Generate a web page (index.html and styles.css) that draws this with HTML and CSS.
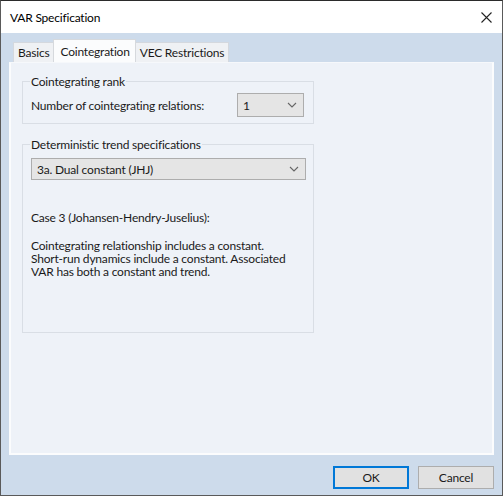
FILE: index.html
```html
<!DOCTYPE html>
<html>
<head>
<meta charset="utf-8">
<link rel="stylesheet" href="styles.css">
</head>
<body>
<div class="window">
  <div class="titlebar">
    <span class="title">VAR Specification</span>
    <svg class="close" width="11" height="11" viewBox="0 0 11 11"><path d="M0.5 0.5 L10.5 10.5 M10.5 0.5 L0.5 10.5" stroke="#222" stroke-width="1.1" fill="none"/></svg>
  </div>
  <div class="body">
    <div class="tabs">
      <div class="tab first">Basics</div>
      <div class="tab active">Cointegration</div>
      <div class="tab last">VEC Restrictions</div>
    </div>
    <div class="panel">
      <div class="group rank">
        <div class="legend">Cointegrating rank</div>
        <div class="row">
          <span>Number of cointegrating relations:</span>
          <div class="select small"><span>1</span><svg width="10" height="6" viewBox="0 0 10 6"><path d="M1 1 L5 5 L9 1" stroke="#666" stroke-width="1.1" fill="none"/></svg></div>
        </div>
      </div>
      <div class="group trend">
        <div class="legend">Deterministic trend specifications</div>
        <div class="select wide"><span>3a. Dual constant (JHJ)</span><svg width="10" height="6" viewBox="0 0 10 6"><path d="M1 1 L5 5 L9 1" stroke="#666" stroke-width="1.1" fill="none"/></svg></div>
        <p class="case">Case 3 (Johansen-Hendry-Juselius):</p>
        <p class="desc">Cointegrating relationship includes a constant.<br>Short-run dynamics include a constant. Associated<br>VAR has both a constant and trend.</p>
      </div>
    </div>
    <div class="footer">
      <button class="btn ok">OK</button>
      <button class="btn">Cancel</button>
    </div>
  </div>
</div>
</body>
</html>
```
FILE: styles.css
```css
html, body {
  margin: 0;
  padding: 0;
}
body {
  font-family: "Lato", "Noto Sans", sans-serif;
  font-size: 12px;
  letter-spacing: -0.2px;
  color: #1a1a1a;
}
.window {
  width: 503px;
  height: 496px;
  box-sizing: border-box;
  border: 1px solid #5a5a5a;
  border-top-color: #2b2b2b;
  background: #cddbeb;
  display: flex;
  flex-direction: column;
}
.titlebar {
  height: 32px;
  background: #ffffff;
  display: flex;
  align-items: center;
  justify-content: space-between;
  padding: 0 10px 0 9px;
  flex: none;
  box-sizing: border-box;
}
.title {
  color: #000;
}
.close {
  margin-top: 1px;
}
.body {
  flex: 1;
  display: flex;
  flex-direction: column;
  padding: 6px 8px 0 8px;
}
.tabs {
  display: flex;
  align-items: flex-end;
  height: 23px;
  padding-left: 4px;
}
.tab {
  height: 20px;
  box-sizing: border-box;
  border: 1px solid #d4d8de;
  border-bottom: none;
  background: #eff1f4;
  padding: 0 4px 0 4px;
  line-height: 19px;
  white-space: nowrap;
}
.tab.active {
  height: 23px;
  background: #fbfcfd;
  border-color: #d6d9dd;
  padding: 0 5px 0 6px;
  line-height: 23px;
  margin: 0 -1px;
  position: relative;
}
.tab.last {
  padding: 0 4px 0 4px;
}
.panel {
  height: 393px;
  box-sizing: border-box;
  background: #eef2f8;
  border: 2px solid #fbfcfd;
  border-top: 1px solid #f6f8fb;
  padding: 18px 0 0 11px;
  display: flex;
  flex-direction: column;
}
.group {
  width: 292px;
  box-sizing: border-box;
  border: 1px solid #d9dee5;
  padding: 0 0 0 8px;
}
.legend {
  display: block;
  width: fit-content;
  margin: -8px 0 0 -1px;
  padding: 0 1px;
  background: #eef2f8;
  line-height: 15px;
}
.rank {
  height: 43px;
}
.rank .row {
  display: flex;
  align-items: center;
  justify-content: space-between;
  padding-right: 9px;
  margin-top: 4px;
}
.select {
  box-sizing: border-box;
  border: 1px solid #adadad;
  background: #e5e5e5;
  display: flex;
  align-items: center;
  justify-content: space-between;
  padding: 0 6px 0 5px;
}
.select.small {
  width: 67px;
  height: 24px;
}
.select.wide {
  width: 275px;
  height: 22px;
  margin-top: 6px;
}
.trend {
  margin-top: 20px;
  height: 189px;
}
.case {
  margin: 31px 0 0 0;
  line-height: 13px;
  white-space: nowrap;
}
.desc {
  margin: 15px 0 0 0;
  line-height: 13px;
  white-space: nowrap;
}
.footer {
  flex: 1;
  display: flex;
  justify-content: flex-end;
  align-items: flex-start;
  gap: 9px;
  padding-top: 11px;
}
.btn {
  width: 76px;
  height: 23px;
  box-sizing: border-box;
  border: 1px solid #adadad;
  background: #e1e1e1;
  font-family: "Lato", "Noto Sans", sans-serif;
  font-size: 12px;
  letter-spacing: -0.2px;
  color: #1a1a1a;
  padding: 0;
  margin: 0;
}
.btn.ok {
  border: 2px solid #0078d7;
}
```
